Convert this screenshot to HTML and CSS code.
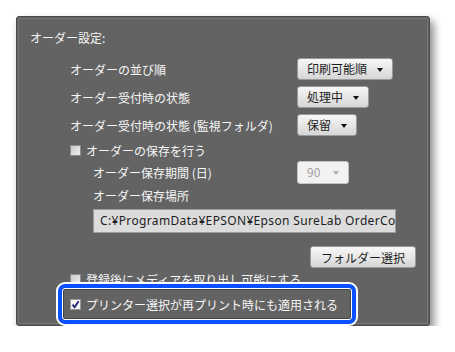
FILE: index.html
```html
<!DOCTYPE html>
<html>
<head>
    <meta charset="utf-8" />
    <title>オーダー設定</title>
    <link rel="stylesheet" href="styles.css">
</head>
<body>
    <div class="panel">
        <div class="title">オーダー設定:</div>

        <div class="settings">
            <div class="row">
                <span class="label">オーダーの並び順</span>
                <span class="select w95">印刷可能順<i class="arrow"></i></span>
            </div>
            <div class="row">
                <span class="label">オーダー受付時の状態</span>
                <span class="select w71">処理中<i class="arrow"></i></span>
            </div>
            <div class="row">
                <span class="label">オーダー受付時の状態 (監視フォルダ)</span>
                <span class="select w59">保留<i class="arrow"></i></span>
            </div>

            <div class="check-row">
                <span class="checkbox"></span>
                <span>オーダーの保存を行う</span>
            </div>

            <div class="sub">
                <div class="row period">
                    <span class="label">オーダー保存期間 (日)</span>
                    <span class="select w51 disabled">90<i class="arrow"></i></span>
                </div>
                <div class="location">オーダー保存場所</div>
                <div class="field">C:¥ProgramData¥EPSON¥Epson SureLab OrderController</div>
            </div>

            <div class="button-row">
                <button class="btn">フォルダー選択</button>
            </div>

            <div class="check-row eject">
                <span class="checkbox"></span>
                <span>登録後にメディアを取り出し可能にする</span>
            </div>
        </div>

        <!-- 強調表示の枠 -->
        <div class="callout">
            <span class="checkbox checked">
                <svg width="9" height="9" viewBox="0 0 9 9"><path d="M1.5 4.6 L3.6 7.2 L7.6 1.2" fill="none" stroke="#1c1f78" stroke-width="1.8"/></svg>
            </span>
            <span>プリンター選択が再プリント時にも適用される</span>
        </div>
    </div>
</body>
</html>
```

FILE: styles.css
```css
/* 全体 */
body {
    margin: 0;
    background-color: #ffffff;
    font-family: "Noto Sans CJK JP", "Noto Sans", sans-serif;
    font-size: 12px;
    color: #f7f7f7;
}

/* ダイアログ部分 */
.panel {
    position: relative;
    margin: 16px 0 0 16px;
    width: 412px;
    height: 297px;
    padding-top: 11px;
    background-color: #636363;
    border: 1px solid #4e4e4e;
    border-radius: 3px;
    box-shadow: inset 0 0 0 1px #5e5e5e, inset 0 0 0 2px #777777, 4px 5px 9px rgba(0, 0, 0, 0.45);
}

.title {
    height: 20px;
    line-height: 20px;
    padding-left: 13px;
    margin-bottom: 7px;
}

.settings {
    padding-left: 53px;
    padding-right: 13px;
}

.row {
    display: flex;
    align-items: center;
    height: 28px;
}

.label {
    width: 227px;
    flex-shrink: 0;
    white-space: nowrap;
}

/* プルダウン */
.select {
    position: relative;
    box-sizing: border-box;
    height: 22px;
    line-height: 20px;
    padding-left: 9px;
    color: #1e1e1e;
    background: linear-gradient(#f7f7f7, #e4e4e4 55%, #d6d6d6);
    border: 1px solid #9a9a9a;
    border-radius: 3px;
}

.w95 { width: 96px; }
.w71 { width: 72px; }
.w59 { width: 60px; }
.w51 { width: 52px; height: 23px; }

.arrow {
    position: absolute;
    right: 9px;
    top: 9px;
    border-left: 3px solid transparent;
    border-right: 3px solid transparent;
    border-top: 4px solid #111;
}

.select.disabled {
    color: #a0a0a0;
    background: #f2f2f2;
    border-color: #c2c2c2;
}

.select.disabled .arrow {
    border-top-color: #b0b0b0;
}

/* チェックボックス */
.check-row {
    display: flex;
    align-items: center;
    gap: 5px;
    height: 22px;
    white-space: nowrap;
}

.checkbox {
    display: inline-flex;
    align-items: center;
    justify-content: center;
    box-sizing: border-box;
    width: 11px;
    height: 11px;
    border: 1px solid #8e8e8e;
    background: linear-gradient(135deg, #c8c8c8, #f0f0f0);
    flex-shrink: 0;
}

.checkbox.checked {
    background: #f4f4f4;
    border-color: #9a9a9a;
}

.sub {
    padding-left: 23px;
}

.period {
    height: 23px;
}

.period .label {
    width: 204px;
}

.location {
    height: 24px;
    line-height: 24px;
}

/* 保存場所 */
.field {
    box-sizing: border-box;
    width: 303px;
    height: 24px;
    line-height: 22px;
    margin-top: 1px;
    padding-left: 6px;
    overflow: hidden;
    white-space: nowrap;
    color: #1e1e1e;
    background-color: #dcdcdc;
    border: 1px solid #9c9c9c;
    font-family: "Noto Sans", "Noto Sans CJK JP", sans-serif;
    font-size: 12px;
    letter-spacing: 0.35px;
}

.button-row {
    display: flex;
    justify-content: flex-end;
    margin-top: 13px;
}

.btn {
    box-sizing: border-box;
    width: 106px;
    height: 22px;
    padding: 0;
    font-family: inherit;
    font-size: 12px;
    color: #1e1e1e;
    background: linear-gradient(#f8f8f8, #e6e6e6 55%, #d4d4d4);
    border: 1px solid #9a9a9a;
    border-radius: 3px;
}

.eject {
    height: 22px;
}

/* 強調枠 */
.callout {
    position: absolute;
    left: 41px;
    top: 267px;
    box-sizing: border-box;
    width: 298px;
    height: 40px;
    display: flex;
    align-items: center;
    gap: 5px;
    padding-left: 8px;
    white-space: nowrap;
    background-color: #636363;
    border: 4px solid #0a50ff;
    border-radius: 7px;
    box-shadow: 0 0 0 2px #ffffff, inset 0 0 0 1px #ffffff, inset 0 0 0 2px #444444;
}
```
